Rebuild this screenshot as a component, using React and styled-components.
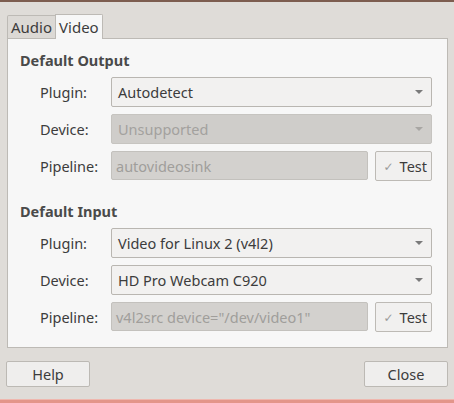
import React from "react";
import styled, { createGlobalStyle } from "styled-components";

const GlobalStyle = createGlobalStyle`
  html, body {
    margin: 0;
    padding: 0;
    background: #dfdcd8;
  }
  body {
    font-family: "Noto Sans", "DejaVu Sans", sans-serif;
    font-size: 14px;
    color: #3c3c3c;
  }
`;

const Window = styled.div`
  width: 454px;
  height: 403px;
  display: flex;
  flex-direction: column;
  border-top: 2px solid #7d5d50;
  box-sizing: border-box;
  overflow: hidden;
`;

const TabBar = styled.div`
  display: flex;
  align-items: flex-end;
  height: 37px;
  padding-left: 7px;
  margin-top: -1px;
`;

const Tab = styled.div`
  height: ${(p) => (p.$active ? "25px" : "23px")};
  padding: 0 ${(p) => (p.$active ? "3px" : "3px")};
  display: flex;
  align-items: center;
  box-sizing: border-box;
  border: 1px solid #bdbab5;
  border-bottom: none;
  background: ${(p) => (p.$active ? "#f7f7f7" : "#dcd9d5")};
  color: #3c3c3c;
  font-size: 15px;
  margin-bottom: ${(p) => (p.$active ? "-1px" : "0")};
  position: relative;
  z-index: ${(p) => (p.$active ? 1 : 0)};
  &:first-child {
    border-radius: 2px 0 0 0;
  }
  & + & {
    border-radius: 0 2px 0 0;
    margin-left: -1px;
  }
`;

const Panel = styled.div`
  margin: 0 6px 0 7px;
  height: 310px;
  box-sizing: border-box;
  background: #f7f7f7;
  border: 1px solid #bdbab5;
  padding: 11px 15px 0 12px;
`;

const Heading = styled.div`
  font-weight: bold;
  font-size: 14.5px;
  color: #4a4a4a;
  height: 20px;
  line-height: 20px;
  margin-top: ${(p) => (p.$first ? "0" : "20px")};
  margin-bottom: 7px;
`;

const Form = styled.div`
  display: grid;
  grid-template-columns: 91px 1fr;
  row-gap: 7px;
`;

const Label = styled.div`
  padding-left: 20px;
  height: 30px;
  display: flex;
  align-items: center;
  color: #3c3c3c;
  font-size: 14.5px;
`;

const Combo = styled.div`
  height: 30px;
  box-sizing: border-box;
  border: 1px solid ${(p) => (p.$disabled ? "#c6c4c0" : "#b9b6b1")};
  border-radius: 2px;
  background: ${(p) => (p.$disabled ? "#cfcdca" : "#f2f1f0")};
  color: ${(p) => (p.$disabled ? "#a3a19e" : "#3c3c3c")};
  display: flex;
  align-items: center;
  justify-content: space-between;
  padding: 0 8px 0 6px;
  font-size: 14.5px;
`;

const Arrow = styled.span`
  width: 0;
  height: 0;
  border-left: 4px solid transparent;
  border-right: 4px solid transparent;
  border-top: 4px solid ${(p) => (p.$disabled ? "#a8a6a3" : "#7a7a7a")};
`;

const PipeRow = styled.div`
  display: flex;
  gap: 7px;
`;

const Entry = styled.div`
  flex: 1;
  height: 29px;
  box-sizing: border-box;
  border: 1px solid #c3c1bd;
  border-radius: 2px;
  background: #d3d1ce;
  color: #a09e9b;
  display: flex;
  align-items: center;
  padding: 0 4px;
  font-size: 14.5px;
  white-space: nowrap;
  overflow: hidden;
`;

const TestButton = styled.div`
  width: 57px;
  height: 30px;
  box-sizing: border-box;
  border: 1px solid #bdbab5;
  border-radius: 2px;
  background: #f1f0ef;
  display: flex;
  align-items: center;
  justify-content: flex-end;
  padding-right: 4px;
  gap: 6px;
  font-size: 14.5px;
  color: #3c3c3c;
`;

const Check = styled.span`
  color: #9a9a9a;
  font-size: 12px;
`;

const ButtonRow = styled.div`
  display: flex;
  justify-content: space-between;
  padding: 13px 6px 0 6px;
`;

const DialogButton = styled.div`
  width: 84px;
  height: 26px;
  box-sizing: border-box;
  border: 1px solid #bcb9b4;
  border-radius: 2px;
  background: #efeeed;
  display: flex;
  align-items: center;
  justify-content: center;
  font-size: 14.5px;
  color: #3c3c3c;
`;

const BelowStrip = styled.div`
  margin-top: auto;
  height: 3px;
  background: #e3958a;
  border-top: 1px solid #efb7ae;
`;

const Field = ({ label, children }) => (
  <>
    <Label>{label}</Label>
    {children}
  </>
);

const Section = ({ title, first, plugin, device, deviceDisabled, pipeline }) => (
  <>
    <Heading $first={first}>{title}</Heading>
    <Form>
      <Field label="Plugin:">
        <Combo>
          {plugin}
          <Arrow />
        </Combo>
      </Field>
      <Field label="Device:">
        <Combo $disabled={deviceDisabled}>
          {device}
          <Arrow $disabled={deviceDisabled} />
        </Combo>
      </Field>
      <Field label="Pipeline:">
        <PipeRow>
          <Entry>{pipeline}</Entry>
          <TestButton>
            <Check>✓</Check>
            Test
          </TestButton>
        </PipeRow>
      </Field>
    </Form>
  </>
);

export default function App() {
  return (
    <>
      <GlobalStyle />
      <Window>
        <TabBar>
          <Tab>Audio</Tab>
          <Tab $active>Video</Tab>
        </TabBar>
        <Panel>
          <Section
            first
            title="Default Output"
            plugin="Autodetect"
            device="Unsupported"
            deviceDisabled
            pipeline="autovideosink"
          />
          <Section
            title="Default Input"
            plugin="Video for Linux 2 (v4l2)"
            device="HD Pro Webcam C920"
            pipeline={'v4l2src device="/dev/video1"'}
          />
        </Panel>
        <ButtonRow>
          <DialogButton>Help</DialogButton>
          <DialogButton>Close</DialogButton>
        </ButtonRow>
        <BelowStrip />
      </Window>
    </>
  );
}
